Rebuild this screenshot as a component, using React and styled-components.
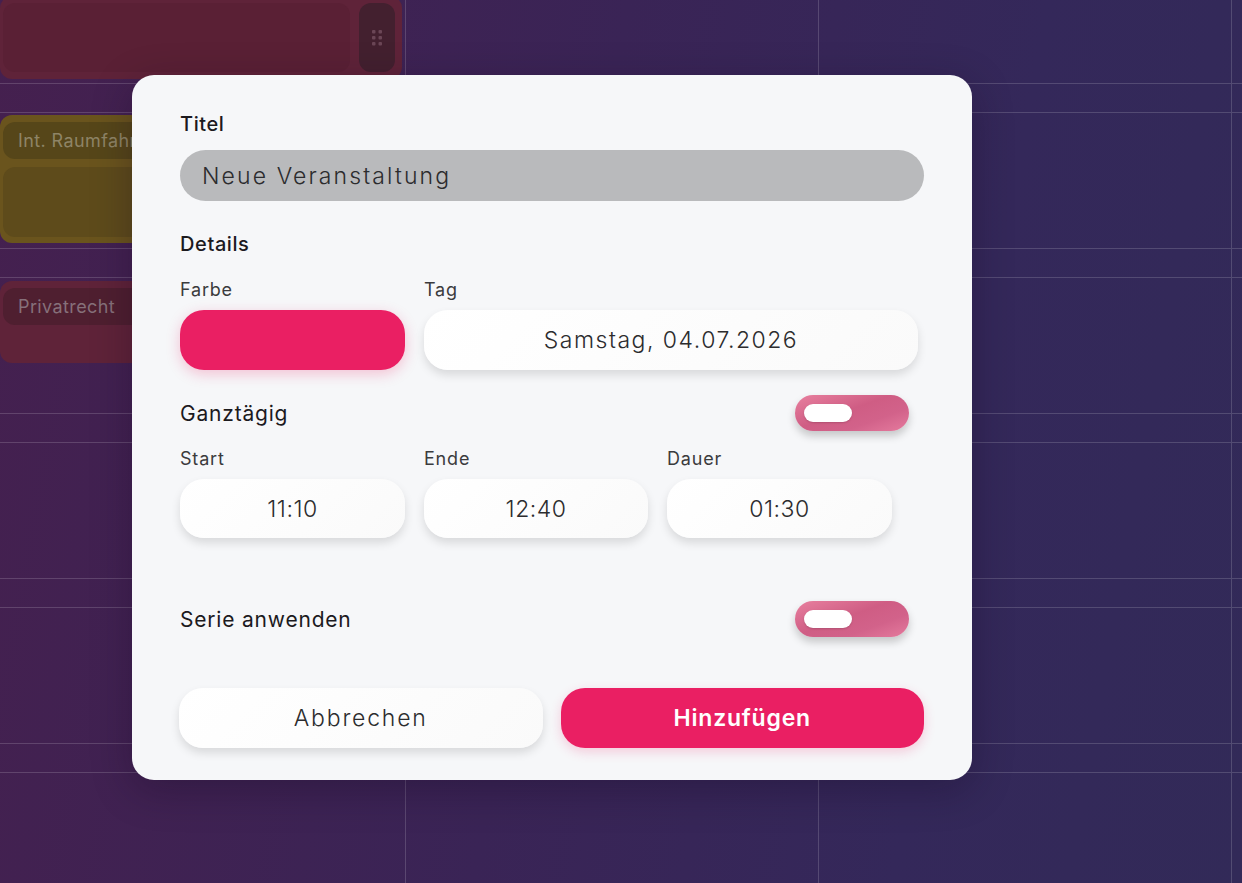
import React from "react";
import styled, { createGlobalStyle } from "styled-components";

const Global = createGlobalStyle`
  html, body { margin: 0; padding: 0; }
  body {
    width: 1242px; height: 883px; overflow: hidden;
    font-family: "Inter", "Open Sans", sans-serif;
  }
`;

const Page = styled.div`
  position: relative;
  width: 1242px;
  height: 883px;
  overflow: hidden;
  background: linear-gradient(100deg, #45204f 0%, #3a2456 45%, #34285a 75%, #322a58 100%);
`;

const Columns = styled.div`
  display: grid;
  grid-template-columns: 406px 413px 413px 10px;
  height: 100%;
`;

const Column = styled.div`
  position: relative;
  display: flex;
  flex-direction: column;
  border-right: ${(p) => (p.$last ? "none" : "1px solid rgba(255,255,255,0.16)")};
  box-sizing: border-box;
`;

const Slot = styled.div`
  flex: none;
  height: ${(p) => p.$h}px;
  border-bottom: 1px solid rgba(255,255,255,0.16);
  box-sizing: border-box;
`;

const Event = styled.div`
  position: absolute;
  left: 0;
  width: 402px;
  top: ${(p) => p.$top}px;
  height: ${(p) => p.$h}px;
  background: ${(p) => p.$bg};
  border-radius: 12px;
  box-sizing: border-box;
  padding: ${(p) => p.$pad || "7px 3px 6px 3px"};
  display: flex;
  flex-direction: column;
  gap: 8px;
`;

const EventRow = styled.div`
  display: flex;
  gap: 9px;
  flex: 1;
`;

const EventBody = styled.div`
  flex: 1;
  background: ${(p) => p.$bg};
  border-radius: 12px;
`;

const Handle = styled.div`
  width: 36px;
  background: #43202f;
  border-radius: 12px;
  display: flex;
  align-items: center;
  justify-content: center;
`;

const EventLabel = styled.div`
  height: 37px;
  flex: none;
  background: ${(p) => p.$bg};
  border-radius: 12px;
  padding-left: 15px;
  display: flex;
  align-items: center;
  font-size: 18px;
  letter-spacing: 0.4px;
  color: ${(p) => p.$color};
  white-space: nowrap;
  overflow: hidden;
`;

const Modal = styled.div`
  position: absolute;
  left: 132px;
  top: 75px;
  width: 840px;
  height: 705px;
  box-sizing: border-box;
  background: #f6f7f9;
  border-radius: 22px;
  padding: 34px 48px 0 48px;
  box-shadow: 0 10px 40px rgba(20, 8, 30, 0.3);
  display: flex;
  flex-direction: column;
`;

const Heading = styled.div`
  font-size: 20px;
  font-weight: 500;
  letter-spacing: 0.6px;
  color: #1c1a1e;
  line-height: 30px;
  height: 30px;
`;

const TitleInput = styled.div`
  margin-top: 11px;
  height: 51px;
  border-radius: 26px;
  background: #b9babc;
  display: flex;
  align-items: center;
  padding-left: 22px;
  font-size: 23px;
  font-weight: 300;
  letter-spacing: 2.1px;
  color: #2c2c2e;
`;

const FieldGrid = styled.div`
  display: flex;
  gap: 19px;
`;

const Field = styled.div`
  display: flex;
  flex-direction: column;
  width: ${(p) => p.$w}px;
`;

const Label = styled.div`
  font-size: 18px;
  color: #3b3b3d;
  letter-spacing: 0.8px;
  line-height: 24px;
  height: 24px;
  margin-top: 2px;
  margin-bottom: 8px;
`;

const Box = styled.div`
  height: ${(p) => p.$h || 60}px;
  border-radius: 24px;
  background: ${(p) => (p.$color ? p.$color : "linear-gradient(135deg, #ffffff 0%, #fafafa 100%)")};
  box-shadow: ${(p) =>
    p.$color
      ? "0 4px 14px rgba(234, 31, 99, 0.25)"
      : "0 5px 10px rgba(0, 0, 0, 0.12)"};
  display: flex;
  align-items: center;
  justify-content: center;
  font-size: 23px;
  font-weight: 300;
  letter-spacing: ${(p) => p.$ls || "1.5px"};
  color: #2c2c2e;
`;

const ToggleRow = styled.div`
  display: flex;
  align-items: center;
  justify-content: space-between;
  padding-right: 15px;
  height: 36px;
`;

const RowText = styled.div`
  font-size: 21px;
  font-weight: 400;
  color: #1c1a1e;
  letter-spacing: 0.8px;
`;

const Toggle = styled.div`
  width: 114px;
  height: 36px;
  border-radius: 18px;
  background: linear-gradient(160deg, #e8809f 0%, #cf5d84 45%, #d2628a 70%, #e57b9e 100%);
  box-shadow: 0 5px 9px rgba(0, 0, 0, 0.2);
  display: flex;
  align-items: center;
  padding-left: 9px;
  box-sizing: border-box;
`;

const Knob = styled.div`
  width: 48px;
  height: 18px;
  border-radius: 9px;
  background: #ffffff;
  box-shadow: 0 1px 2px rgba(0, 0, 0, 0.15);
`;

const Buttons = styled.div`
  display: flex;
  gap: 18px;
  margin-left: -1px;
`;

const Button = styled.div`
  width: 364px;
  height: 60px;
  border-radius: 24px;
  display: flex;
  align-items: center;
  justify-content: center;
  font-size: 23px;
  background: ${(p) => (p.$primary ? "#ea1f63" : "linear-gradient(135deg, #ffffff 0%, #fafafa 100%)")};
  color: ${(p) => (p.$primary ? "#ffffff" : "#2c2c2e")};
  font-weight: ${(p) => (p.$primary ? 600 : 300)};
  letter-spacing: ${(p) => (p.$primary ? "0.8px" : "1.8px")};
  box-shadow: ${(p) =>
    p.$primary ? "0 4px 12px rgba(234, 31, 99, 0.2)" : "0 5px 10px rgba(0, 0, 0, 0.12)"};
`;

const Spacer = styled.div`
  height: ${(p) => p.$h}px;
  flex: none;
`;

const Grip = () => (
  <svg width="10" height="16" viewBox="0 0 10 16">
    {[0, 1, 2].map((r) =>
      [0, 1].map((c) => (
        <rect key={`${r}-${c}`} x={c * 6.5} y={r * 6} width="3.5" height="3.5" rx="1" fill="#6b4656" />
      ))
    )}
  </svg>
);

const slotPattern = [84, 29, 136, 29, 136, 29, 136, 29, 136, 29, 136];

const CalendarColumn = ({ last, children }) => (
  <Column $last={last}>
    {slotPattern.map((h, i) => (
      <Slot key={i} $h={h} />
    ))}
    {children}
  </Column>
);

export default function App() {
  return (
    <>
      <Global />
      <Page>
        <Columns>
          <CalendarColumn>
            <Event $top={-4} $h={83} $bg="#5f2339" $pad="7px 7px 7px 3px">
              <EventRow>
                <EventBody $bg="#5a2035" />
                <Handle>
                  <Grip />
                </Handle>
              </EventRow>
            </Event>
            <Event $top={115} $h={128} $bg="#6a541d">
              <EventLabel $bg="#564619" $color="#8e8466">Int. Raumfahrt</EventLabel>
              <EventBody $bg="#5e4b1b" />
            </Event>
            <Event $top={281} $h={82} $bg="#5f2339">
              <EventLabel $bg="#4f1f30" $color="#86707a">Privatrecht</EventLabel>
            </Event>
          </CalendarColumn>
          <CalendarColumn />
          <CalendarColumn />
          <CalendarColumn last />
        </Columns>

        <Modal>
          <Heading>Titel</Heading>
          <TitleInput>Neue Veranstaltung</TitleInput>
          <Spacer $h={28} />
          <Heading>Details</Heading>
          <Spacer $h={17} />
          <FieldGrid>
            <Field $w={225}>
              <Label>Farbe</Label>
              <Box $color="#ea1f63" />
            </Field>
            <Field $w={494}>
              <Label>Tag</Label>
              <Box>Samstag, 04.07.2026</Box>
            </Field>
          </FieldGrid>
          <Spacer $h={25} />
          <ToggleRow>
            <RowText>Ganztägig</RowText>
            <Toggle>
              <Knob />
            </Toggle>
          </ToggleRow>
          <Spacer $h={14} />
          <FieldGrid>
            <Field $w={225}>
              <Label>Start</Label>
              <Box $h={59} $ls="0.5px">11:10</Box>
            </Field>
            <Field $w={224}>
              <Label>Ende</Label>
              <Box $h={59} $ls="0.5px">12:40</Box>
            </Field>
            <Field $w={225}>
              <Label>Dauer</Label>
              <Box $h={59} $ls="0.5px">01:30</Box>
            </Field>
          </FieldGrid>
          <Spacer $h={63} />
          <ToggleRow>
            <RowText>Serie anwenden</RowText>
            <Toggle>
              <Knob />
            </Toggle>
          </ToggleRow>
          <Spacer $h={51} />
          <Buttons>
            <Button>Abbrechen</Button>
            <Button $primary>Hinzufügen</Button>
          </Buttons>
        </Modal>
      </Page>
    </>
  );
}
